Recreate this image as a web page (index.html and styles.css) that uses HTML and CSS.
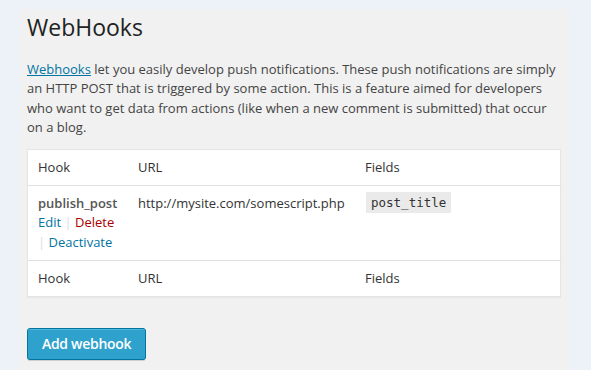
FILE: index.html
```html
<!DOCTYPE html>
<html>
<head>
<meta charset="utf-8">
<link rel="stylesheet" href="styles.css">
</head>
<body>
<div class="panel">
  <h2 class="title">WebHooks</h2>
  <p class="intro"><a href="#" class="link">Webhooks</a> let you easily develop push notifications. These push notifications are simply an HTTP POST that is triggered by some action. This is a feature aimed for developers who want to get data from actions (like when a new comment is submitted) that occur on a blog.</p>
  <table class="hooks">
    <thead>
      <tr><th class="c-hook">Hook</th><th class="c-url">URL</th><th class="c-fields">Fields</th></tr>
    </thead>
    <tbody>
      <tr>
        <td class="c-hook">
          <strong class="hook-name">publish_post</strong>
          <div class="row-actions"><a href="#" class="act">Edit</a> <span class="sep">|</span> <a href="#" class="act del">Delete</a> <span class="sep">|</span>&nbsp;<a href="#" class="act">Deactivate</a></div>
        </td>
        <td class="c-url">http://mysite.com/somescript.php</td>
        <td class="c-fields"><code class="field">post_title</code></td>
      </tr>
    </tbody>
    <tfoot>
      <tr><th class="c-hook">Hook</th><th class="c-url">URL</th><th class="c-fields">Fields</th></tr>
    </tfoot>
  </table>
  <div class="actions"><button class="btn-primary">Add webhook</button></div>
</div>
</body>
</html>
```
FILE: styles.css
```css
html, body {
  margin: 0;
  padding: 0;
  background: #edf1f8;
  height: 100%;
}
body {
  font-family: "Open Sans", sans-serif;
  color: #444;
  font-size: 13px;
}
.panel {
  margin-left: 20px;
  margin-top: 9px;
  width: 542px;
  padding: 4px 0 20px 7px;
  background: #f1f1f1;
  min-height: 340px;
}
.title {
  margin: 0;
  padding: 0;
  font-size: 23px;
  font-weight: 400;
  line-height: 29px;
  color: #222;
}
.intro {
  width: 532px;
  margin: 18px 0 11px 0;
  font-size: 13px;
  line-height: 19.4px;
  color: #444;
}
.link {
  color: #0074a2;
  text-decoration: underline;
}
.hooks {
  width: 534px;
  table-layout: fixed;
  border-collapse: collapse;
  background: #fff;
  border: 1px solid #e5e5e5;
  box-shadow: 0 1px 1px rgba(0,0,0,0.04);
  font-size: 13px;
}
.hooks th {
  text-align: left;
  font-weight: 400;
  color: #333;
  padding: 8px 10px;
  line-height: 19px;
  height: 19px;
}
.hooks thead th { border-bottom: 1px solid #e1e1e1; }
.hooks tfoot th { border-top: 1px solid #e1e1e1; }
.hooks td {
  vertical-align: top;
  padding: 8px 10px 8px 10px;
  line-height: 19.5px;
  color: #333;
}
.c-hook { width: 80px; }
.c-url { width: 207px; }
.hook-name {
  display: block;
  font-weight: 600;
  color: #555;
  font-size: 13px;
}
.row-actions {
  font-size: 13px;
}
.act { color: #0074a2; text-decoration: none; }
.act.del { color: #a00; }
.sep { color: #ddd; }
.hooks td.c-fields { padding-top: 6px; padding-left: 11px; }
.field {
  display: inline-block;
  font-family: "DejaVu Sans Mono", "Liberation Mono", monospace;
  font-size: 12.5px;
  line-height: 15px;
  padding: 3px 5px 3px 5px;
  background: #eaeaea;
  color: #333;
}
.actions {
  padding-top: 31px;
}
.btn-primary {
  font-family: "Open Sans", sans-serif;
  font-size: 14px;
  font-weight: 600;
  color: #fff;
  background: #2ea2cc;
  border: 1px solid #0074a2;
  border-radius: 3px;
  box-shadow: inset 0 1px 0 rgba(120,200,230,0.5), 0 1px 0 rgba(0,0,0,0.15);
  height: 32px;
  padding: 0 14px;
  line-height: 30px;
  white-space: nowrap;
  letter-spacing: -0.3px;
}
```
